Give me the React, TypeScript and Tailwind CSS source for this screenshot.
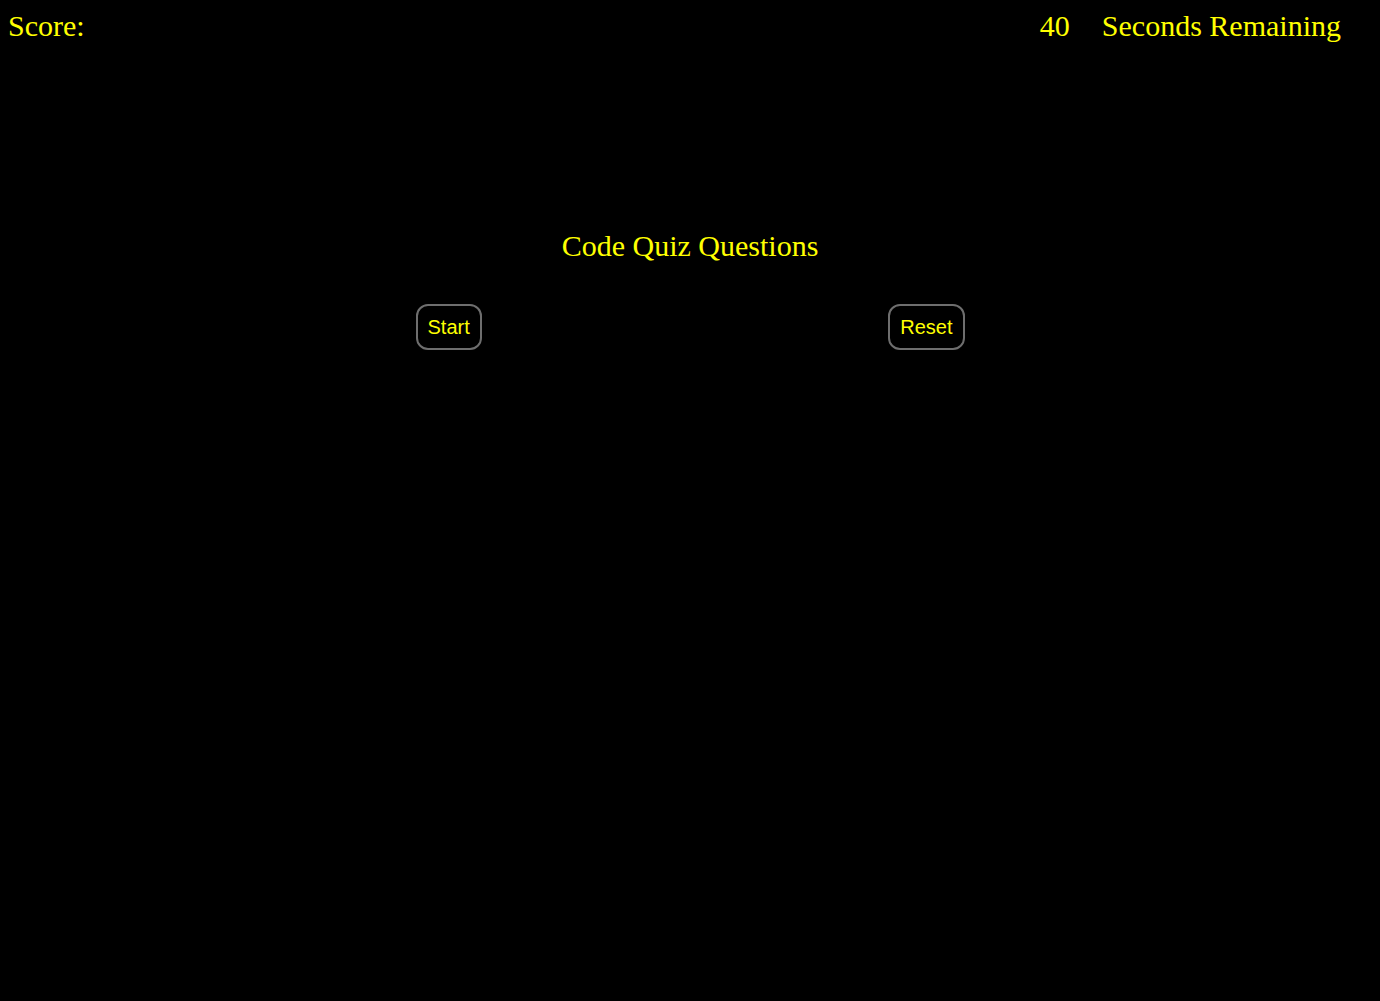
export default function App() {
  return (
    <div className="min-h-[1001px] bg-black text-[#ffff00] font-['Liberation_Serif',serif]">
      <header className="flex items-start justify-between pl-2 pr-[39px] pt-[7px] text-[30px] leading-[38px]">
        <div>Score:</div>
        <div className="flex gap-[32px]">
          <span>40</span>
          <span>Seconds Remaining</span>
        </div>
      </header>
      <main className="pt-[182px]">
        <h1 className="text-center text-[30px] leading-[38px]">Code Quiz Questions</h1>
        <div className="mx-auto mt-[39px] flex w-[549px] justify-between">
          <button className="h-[46px] rounded-xl border-2 border-[#6e6e6e] bg-black px-[10px] font-['Liberation_Sans',sans-serif] text-[20px] text-[#ffff00]">
            Start
          </button>
          <button className="h-[46px] rounded-xl border-2 border-[#6e6e6e] bg-black px-[10px] font-['Liberation_Sans',sans-serif] text-[20px] text-[#ffff00]">
            Reset
          </button>
        </div>
      </main>
    </div>
  );
}
